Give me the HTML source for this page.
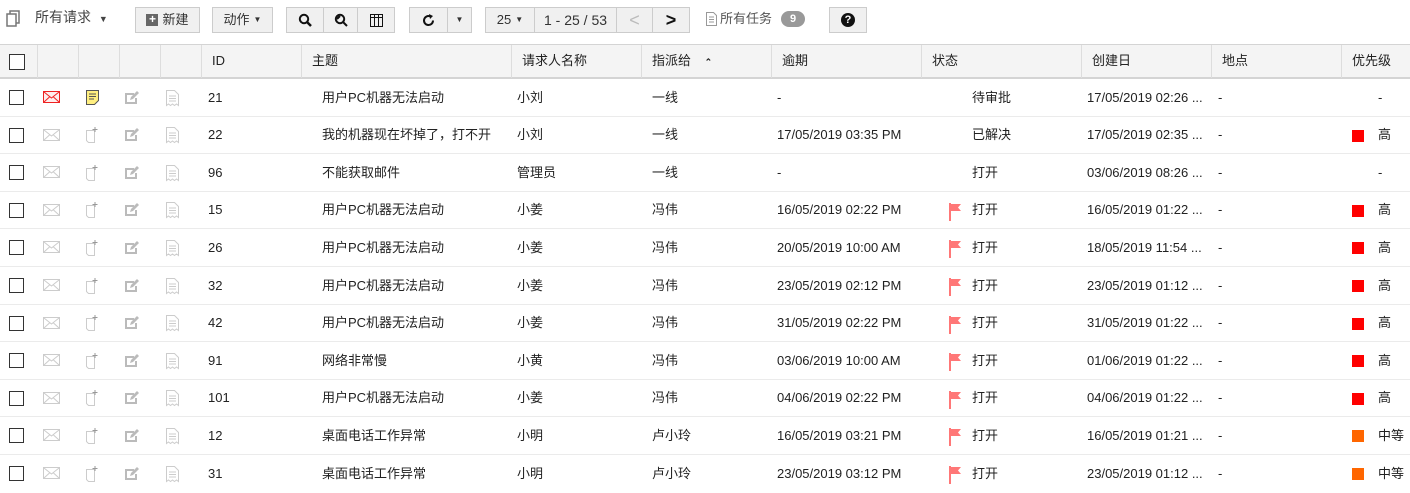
<!DOCTYPE html>
<html><head><meta charset="utf-8"><style>
*{box-sizing:border-box;margin:0;padding:0}
body{width:1410px;height:488px;overflow:hidden;background:#fff;font-family:"Liberation Sans","Noto Sans CJK SC",sans-serif;font-size:13px;line-height:16px;color:#222;position:relative}
.b{position:absolute;top:7px;height:26px;border:1px solid #ccc;background:#f0f0f0;display:flex;align-items:center;justify-content:center;font-size:13px;line-height:16px;color:#333}
.hd{position:absolute;top:44px;left:0;width:1410px;height:35px;background:#f4f4f4;border-top:1px solid #d4d4d4;border-bottom:2px solid #d4d4d4}
.hd span{position:absolute;top:8px;font-size:13px;line-height:16px;color:#222}
.vl{position:absolute;top:0;height:33px;width:1px;background:#ddd}
.row{position:absolute;left:0;width:1410px;height:37.6px;border-bottom:1px solid #ebebeb}
.row>*{position:absolute;top:10.5px;line-height:16px}
.cb{left:9px;top:11px!important;width:15px;height:15px;border:1px solid #333;background:#fff}
.m{left:43px;top:12px!important}.n{left:86px}.e{left:124px}.d{left:166px}
.id{left:208px}.s{left:322px}.r{left:517px}.a{left:652px}.o{left:777px}.fl{left:949px;top:11px!important}.st{left:972px}.c{left:1087px}.l{left:1218px}.p{left:1352px;top:13px!important;width:12px;height:12px;background:#f00}.pt{left:1378px}
.or{background:#f60}
</style></head><body>
<svg width="0" height="0" style="position:absolute"><defs>
<symbol id="mg" viewBox="0 0 17 12"><rect x=".5" y=".5" width="16" height="11" fill="#fff" stroke="#ccc"/><path d="M1 1l7.5 6L16 1M1 11l5.5-5M16 11l-5.5-5" fill="none" stroke="#ccc"/></symbol>
<symbol id="mr" viewBox="0 0 17 12"><rect x=".5" y=".5" width="16" height="11" fill="#fee" stroke="#e22"/><path d="M1 1l7.5 6L16 1M1 11l5.5-5M16 11l-5.5-5" fill="none" stroke="#e22"/></symbol>
<symbol id="nt" viewBox="0 0 12 17"><path d="M.5 3.5h8v12h-6l-2-2z" fill="#fff" stroke="#ccc"/><path d="M9 0v5M6.5 2.5h5" stroke="#999"/></symbol>
<symbol id="ny" viewBox="0 0 14 15"><path d="M.5.5h12v10l-4 4h-8z" fill="#ffef80" stroke="#555"/><path d="M3 4h7M3 6.5h7M3 9h5" stroke="#555"/></symbol>
<symbol id="ed" viewBox="0 0 16 15"><path d="M1 3h9v2H3v7h8V8h2v6H1z" fill="#bbb"/><path d="M6 10l1-3 6-6 2 2-6 6z" fill="#bbb"/></symbol>
<symbol id="dc" viewBox="0 0 13 17"><path d="M.5.5h8l4 4v11l-2-1.5-2 1.5-2-1.5-2 1.5-2-1.5-2 1.5z" fill="#fff" stroke="#ccc"/><path d="M3 6h7M3 8.5h7M3 11h7" stroke="#ccc"/></symbol>
<symbol id="fg" viewBox="0 0 12 18"><path d="M1 0v18" stroke="#f77" stroke-width="2"/><path d="M2 1h10l-3 3.5 3 3.5H2z" fill="#f77"/></symbol>
</defs></svg>

<svg style="position:absolute;left:6px;top:10px" width="15" height="17" viewBox="0 0 15 17"><rect x="1" y="4" width="9" height="12" fill="none" stroke="#777" stroke-width="1.5"/><path d="M4 4V1h9v12h-3" fill="none" stroke="#777" stroke-width="1.5"/></svg>
<div style="position:absolute;left:35px;top:8px;font-size:14px;line-height:18px;color:#444">所有请求 <span style="font-size:9px;margin-left:4px">▼</span></div>
<div class="b" style="left:135px;width:65px"><span style="display:inline-block;width:12px;height:12px;background:#666;color:#fff;font-size:12px;line-height:11px;text-align:center;font-weight:bold;margin-right:4px">+</span>新建</div>
<div class="b" style="left:212px;width:61px">动作 <span style="font-size:8px;margin-left:4px">▼</span></div>
<div class="b" style="left:286px;width:38px"><svg width="14" height="14" viewBox="0 0 14 14"><circle cx="6" cy="6" r="4.2" fill="none" stroke="#111" stroke-width="2"/><path d="M9 9l4 4" stroke="#111" stroke-width="2.5"/></svg></div>
<div class="b" style="left:323px;width:35px"><svg width="14" height="14" viewBox="0 0 14 14"><circle cx="6" cy="6" r="4.2" fill="none" stroke="#111" stroke-width="2"/><path d="M9 9l4 4M3 6l3-3" stroke="#111" stroke-width="2"/></svg></div>
<div class="b" style="left:357px;width:38px"><svg width="13" height="13" viewBox="0 0 13 13"><rect x=".5" y=".5" width="12" height="12" fill="none" stroke="#111"/><path d="M0 3.5h13M4.5 0v13M8.5 0v13" stroke="#111"/></svg></div>
<div class="b" style="left:409px;width:39px"><svg width="13" height="13" viewBox="0 0 13 13"><path d="M11 6.5A4.5 4.5 0 1 1 8 2.3" fill="none" stroke="#111" stroke-width="2"/><path d="M7 0l4 2-3 3z" fill="#111"/></svg></div>
<div class="b" style="left:447px;width:25px;font-size:8px">▼</div>
<div class="b" style="left:485px;width:50px">25 <span style="font-size:8px;margin-left:4px">▼</span></div>
<div class="b" style="left:534px;width:83px;font-size:14px">1 - 25 / 53</div>
<div class="b" style="left:616px;width:37px;color:#bbb;font-size:18px">&lt;</div>
<div class="b" style="left:652px;width:38px;color:#111;font-size:18px;font-weight:bold">&gt;</div>
<svg style="position:absolute;left:706px;top:12px" width="11" height="14" viewBox="0 0 11 14"><path d="M.5.5h7l3 3v10H.5z" fill="none" stroke="#999"/><path d="M3 5h5M3 7.5h5M3 10h5" stroke="#999"/></svg>
<div style="position:absolute;left:720px;top:11px;font-size:13px;line-height:16px;color:#555">所有任务</div>
<div style="position:absolute;left:781px;top:11px;width:24px;height:16px;border-radius:8px;background:#999;color:#fff;font-size:11px;font-weight:bold;text-align:center;line-height:16px">9</div>
<div class="b" style="left:829px;width:38px"><span style="display:inline-block;width:14px;height:14px;border-radius:50%;background:#111;color:#fff;font-size:11px;font-weight:bold;text-align:center;line-height:14px">?</span></div>

<div class="hd">
<div style="position:absolute;left:9px;top:9px;width:16px;height:16px;border:1px solid #333;background:#fff"></div>
<div class="vl" style="left:37px"></div><div class="vl" style="left:78px"></div><div class="vl" style="left:119px"></div><div class="vl" style="left:160px"></div><div class="vl" style="left:201px"></div><div class="vl" style="left:301px"></div><div class="vl" style="left:511px"></div><div class="vl" style="left:641px"></div><div class="vl" style="left:771px"></div><div class="vl" style="left:921px"></div><div class="vl" style="left:1081px"></div><div class="vl" style="left:1211px"></div><div class="vl" style="left:1341px"></div>
<span style="left:212px">ID</span><span style="left:312px">主题</span><span style="left:522px">请求人名称</span><span style="left:652px">指派给 <b style="font-size:9px;margin-left:10px">⌃</b></span><span style="left:782px">逾期</span><span style="left:932px">状态</span><span style="left:1092px">创建日</span><span style="left:1222px">地点</span><span style="left:1352px">优先级</span>
</div>

<div class="row" style="top:79px"><div class="cb"></div><svg class="m" width="17" height="12"><use href="#mr"/></svg><svg class="n" width="14" height="15"><use href="#ny"/></svg><svg class="e" width="16" height="15"><use href="#ed"/></svg><svg class="d" width="13" height="17"><use href="#dc"/></svg><span class="id">21</span><span class="s">用户PC机器无法启动</span><span class="r">小刘</span><span class="a">一线</span><span class="o">-</span><span class="st">待审批</span><span class="c">17/05/2019 02:26 ...</span><span class="l">-</span><span class="pt">-</span></div>
<div class="row" style="top:116.6px"><div class="cb"></div><svg class="m" width="17" height="12"><use href="#mg"/></svg><svg class="n" width="12" height="17"><use href="#nt"/></svg><svg class="e" width="16" height="15"><use href="#ed"/></svg><svg class="d" width="13" height="17"><use href="#dc"/></svg><span class="id">22</span><span class="s">我的机器现在坏掉了，打不开</span><span class="r">小刘</span><span class="a">一线</span><span class="o">17/05/2019 03:35 PM</span><span class="st">已解决</span><span class="c">17/05/2019 02:35 ...</span><span class="l">-</span><i class="p"></i><span class="pt">高</span></div>
<div class="row" style="top:154.2px"><div class="cb"></div><svg class="m" width="17" height="12"><use href="#mg"/></svg><svg class="n" width="12" height="17"><use href="#nt"/></svg><svg class="e" width="16" height="15"><use href="#ed"/></svg><svg class="d" width="13" height="17"><use href="#dc"/></svg><span class="id">96</span><span class="s">不能获取邮件</span><span class="r">管理员</span><span class="a">一线</span><span class="o">-</span><span class="st">打开</span><span class="c">03/06/2019 08:26 ...</span><span class="l">-</span><span class="pt">-</span></div>
<div class="row" style="top:191.8px"><div class="cb"></div><svg class="m" width="17" height="12"><use href="#mg"/></svg><svg class="n" width="12" height="17"><use href="#nt"/></svg><svg class="e" width="16" height="15"><use href="#ed"/></svg><svg class="d" width="13" height="17"><use href="#dc"/></svg><span class="id">15</span><span class="s">用户PC机器无法启动</span><span class="r">小姜</span><span class="a">冯伟</span><span class="o">16/05/2019 02:22 PM</span><svg class="fl" width="12" height="18"><use href="#fg"/></svg><span class="st">打开</span><span class="c">16/05/2019 01:22 ...</span><span class="l">-</span><i class="p"></i><span class="pt">高</span></div>
<div class="row" style="top:229.4px"><div class="cb"></div><svg class="m" width="17" height="12"><use href="#mg"/></svg><svg class="n" width="12" height="17"><use href="#nt"/></svg><svg class="e" width="16" height="15"><use href="#ed"/></svg><svg class="d" width="13" height="17"><use href="#dc"/></svg><span class="id">26</span><span class="s">用户PC机器无法启动</span><span class="r">小姜</span><span class="a">冯伟</span><span class="o">20/05/2019 10:00 AM</span><svg class="fl" width="12" height="18"><use href="#fg"/></svg><span class="st">打开</span><span class="c">18/05/2019 11:54 ...</span><span class="l">-</span><i class="p"></i><span class="pt">高</span></div>
<div class="row" style="top:267px"><div class="cb"></div><svg class="m" width="17" height="12"><use href="#mg"/></svg><svg class="n" width="12" height="17"><use href="#nt"/></svg><svg class="e" width="16" height="15"><use href="#ed"/></svg><svg class="d" width="13" height="17"><use href="#dc"/></svg><span class="id">32</span><span class="s">用户PC机器无法启动</span><span class="r">小姜</span><span class="a">冯伟</span><span class="o">23/05/2019 02:12 PM</span><svg class="fl" width="12" height="18"><use href="#fg"/></svg><span class="st">打开</span><span class="c">23/05/2019 01:12 ...</span><span class="l">-</span><i class="p"></i><span class="pt">高</span></div>
<div class="row" style="top:304.6px"><div class="cb"></div><svg class="m" width="17" height="12"><use href="#mg"/></svg><svg class="n" width="12" height="17"><use href="#nt"/></svg><svg class="e" width="16" height="15"><use href="#ed"/></svg><svg class="d" width="13" height="17"><use href="#dc"/></svg><span class="id">42</span><span class="s">用户PC机器无法启动</span><span class="r">小姜</span><span class="a">冯伟</span><span class="o">31/05/2019 02:22 PM</span><svg class="fl" width="12" height="18"><use href="#fg"/></svg><span class="st">打开</span><span class="c">31/05/2019 01:22 ...</span><span class="l">-</span><i class="p"></i><span class="pt">高</span></div>
<div class="row" style="top:342.2px"><div class="cb"></div><svg class="m" width="17" height="12"><use href="#mg"/></svg><svg class="n" width="12" height="17"><use href="#nt"/></svg><svg class="e" width="16" height="15"><use href="#ed"/></svg><svg class="d" width="13" height="17"><use href="#dc"/></svg><span class="id">91</span><span class="s">网络非常慢</span><span class="r">小黄</span><span class="a">冯伟</span><span class="o">03/06/2019 10:00 AM</span><svg class="fl" width="12" height="18"><use href="#fg"/></svg><span class="st">打开</span><span class="c">01/06/2019 01:22 ...</span><span class="l">-</span><i class="p"></i><span class="pt">高</span></div>
<div class="row" style="top:379.8px"><div class="cb"></div><svg class="m" width="17" height="12"><use href="#mg"/></svg><svg class="n" width="12" height="17"><use href="#nt"/></svg><svg class="e" width="16" height="15"><use href="#ed"/></svg><svg class="d" width="13" height="17"><use href="#dc"/></svg><span class="id">101</span><span class="s">用户PC机器无法启动</span><span class="r">小姜</span><span class="a">冯伟</span><span class="o">04/06/2019 02:22 PM</span><svg class="fl" width="12" height="18"><use href="#fg"/></svg><span class="st">打开</span><span class="c">04/06/2019 01:22 ...</span><span class="l">-</span><i class="p"></i><span class="pt">高</span></div>
<div class="row" style="top:417.4px"><div class="cb"></div><svg class="m" width="17" height="12"><use href="#mg"/></svg><svg class="n" width="12" height="17"><use href="#nt"/></svg><svg class="e" width="16" height="15"><use href="#ed"/></svg><svg class="d" width="13" height="17"><use href="#dc"/></svg><span class="id">12</span><span class="s">桌面电话工作异常</span><span class="r">小明</span><span class="a">卢小玲</span><span class="o">16/05/2019 03:21 PM</span><svg class="fl" width="12" height="18"><use href="#fg"/></svg><span class="st">打开</span><span class="c">16/05/2019 01:21 ...</span><span class="l">-</span><i class="p or"></i><span class="pt">中等</span></div>
<div class="row" style="top:455px;border:0"><div class="cb"></div><svg class="m" width="17" height="12"><use href="#mg"/></svg><svg class="n" width="12" height="17"><use href="#nt"/></svg><svg class="e" width="16" height="15"><use href="#ed"/></svg><svg class="d" width="13" height="17"><use href="#dc"/></svg><span class="id">31</span><span class="s">桌面电话工作异常</span><span class="r">小明</span><span class="a">卢小玲</span><span class="o">23/05/2019 03:12 PM</span><svg class="fl" width="12" height="18"><use href="#fg"/></svg><span class="st">打开</span><span class="c">23/05/2019 01:12 ...</span><span class="l">-</span><i class="p or"></i><span class="pt">中等</span></div>
</body></html>
